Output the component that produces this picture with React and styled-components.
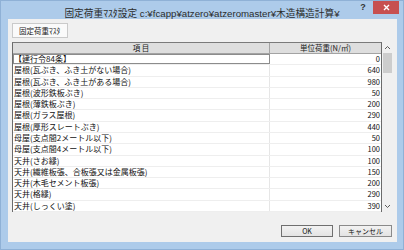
import React from 'react';
import styled, { createGlobalStyle } from 'styled-components';

const GlobalStyle = createGlobalStyle`
  html, body {
    margin: 0;
    padding: 0;
    background: #ffffff;
  }
  body {
    font-family: "Noto Sans CJK JP", "Noto Sans", sans-serif;
  }
  * {
    box-sizing: border-box;
  }
`;

const Window = styled.div`
  width: 404px;
  height: 250px;
  background-color: #adcbea;
  border: 1px solid #8fb1d6;
  display: flex;
  flex-direction: column;
`;

const TitleBar = styled.div`
  height: 18px;
  display: grid;
  grid-template-columns: 1fr auto 1fr;
  align-items: start;
`;

const Title = styled.div`
  grid-column: 2;
  margin-top: 6px;
  font-family: "Liberation Sans", "Noto Sans CJK JP", sans-serif;
  font-size: 9.7px;
  line-height: 13px;
  color: #2b2b2b;
  white-space: nowrap;
`;

const Controls = styled.div`
  grid-column: 3;
  justify-self: end;
  display: flex;
  align-items: flex-start;
  gap: 5px;
  margin-right: 4px;
`;

const HelpButton = styled.div`
  width: 10px;
  margin-top: 1px;
  font-family: "Liberation Sans", sans-serif;
  font-size: 9px;
  font-weight: bold;
  line-height: 10px;
  color: #333333;
  text-align: center;
`;

const CloseButton = styled.div`
  width: 26px;
  height: 13px;
  background-color: #c75050;
  color: #ffffff;
  display: flex;
  align-items: center;
  justify-content: center;
`;

const Body = styled.div`
  flex: 1;
  margin: 0 6px 7px 7px;
  background-color: #f0f0f0;
  padding: 4px 5px 0 4px;
  display: flex;
  flex-direction: column;
`;

const Tab = styled.div`
  width: 56px;
  height: 15px;
  border: 1px solid #cacaca;
  background-color: #fafafa;
  font-size: 7.5px;
  line-height: 13px;
  padding-left: 6px;
  color: #1a1a1a;
  margin-bottom: 4px;
`;

const GridArea = styled.div`
  display: flex;
  height: 170px;
`;

const Grid = styled.div`
  width: 370px;
  background-color: #ffffff;
  border-left: 1px solid #6b6b6b;
  border-right: 1px solid #6b6b6b;
  border-top: 1px solid #7a7a7a;
  display: flex;
  flex-direction: column;
`;

const HeaderRow = styled.div`
  display: grid;
  grid-template-columns: 257px 1fr;
  height: 11px;
  background-color: #dedede;
  border-bottom: 1px solid #a3a3a3;
`;

const HeaderCell = styled.div`
  font-size: 7.5px;
  line-height: 10px;
  text-align: center;
  color: #1a1a1a;
  border-right: ${p => (p.$last ? 'none' : '1px solid #a3a3a3')};
`;

const Row = styled.div`
  display: grid;
  grid-template-columns: 257px 1fr;
  height: 11.3px;
  border-bottom: 1px solid #eeeeee;
`;

const LabelCell = styled.div`
  font-size: 8px;
  line-height: 10px;
  padding-left: 1px;
  color: #111111;
  white-space: nowrap;
  border-right: 1px solid #e6e6e6;
  outline: ${p => (p.$focused ? '1px solid #8c8c8c' : 'none')};
  outline-offset: -1px;
`;

const ValueCell = styled.div`
  font-size: 7.5px;
  line-height: 10px;
  padding-right: 1px;
  text-align: right;
  color: #111111;
`;

const ScrollBar = styled.div`
  width: 10px;
  display: flex;
  flex-direction: column;
`;

const ScrollArrow = styled.div`
  height: 11px;
  display: flex;
  align-items: center;
  justify-content: center;
`;

const ScrollTrack = styled.div`
  flex: 1;
  padding: 0 0 0 1px;
`;

const Thumb = styled.div`
  width: 9px;
  height: 20px;
  background-color: #cdcdcd;
`;

const ButtonRow = styled.div`
  display: flex;
  justify-content: flex-end;
  gap: 6px;
  padding-top: 13px;
`;

const Button = styled.div`
  width: ${p => p.$w}px;
  height: 12px;
  border: 1px solid ${p => (p.$default ? '#6f6f6f' : '#8a8a8a')};
  background: linear-gradient(#f2f2f2, #e3e3e3);
  font-size: 7px;
  line-height: 10px;
  text-align: center;
  color: #111111;
`;

const Chevron = ({ up }) => (
  <svg width="7" height="5" viewBox="0 0 7 5">
    <path
      d={up ? 'M1 4 L3.5 1.5 L6 4' : 'M1 1 L3.5 3.5 L6 1'}
      fill="none"
      stroke="#5a5a5a"
      strokeWidth="1"
    />
  </svg>
);

const rows = [
  ['【建行令84条】', '0'],
  ['屋根(瓦ぶき、ふき土がない場合)', '640'],
  ['屋根(瓦ぶき、ふき土がある場合)', '980'],
  ['屋根(波形鉄板ぶき)', '50'],
  ['屋根(薄鉄板ぶき)', '200'],
  ['屋根(ガラス屋根)', '290'],
  ['屋根(厚形スレートぶき)', '440'],
  ['母屋(支点間2メートル以下)', '50'],
  ['母屋(支点間4メートル以下)', '100'],
  ['天井(さお縁)', '100'],
  ['天井(繊維板張、合板張又は金属板張)', '150'],
  ['天井(木毛セメント板張)', '200'],
  ['天井(格縁)', '290'],
  ['天井(しっくい塗)', '390'],
];

const App = () => (
  <>
    <GlobalStyle />
    <Window>
      <TitleBar>
        <Title>固定荷重ﾏｽﾀ設定 c:¥fcapp¥atzero¥atzeromaster¥木造構造計算¥</Title>
        <Controls>
          <HelpButton>?</HelpButton>
          <CloseButton>
            <svg width="7" height="7" viewBox="0 0 7 7">
              <path d="M1 1 L6 6 M6 1 L1 6" stroke="#ffffff" strokeWidth="1.4" />
            </svg>
          </CloseButton>
        </Controls>
      </TitleBar>
      <Body>
        <Tab>固定荷重ﾏｽﾀ</Tab>
        <GridArea>
          <Grid>
            <HeaderRow>
              <HeaderCell>項 目</HeaderCell>
              <HeaderCell $last>単位荷重(N/㎡)</HeaderCell>
            </HeaderRow>
            {rows.map(([label, value], i) => (
              <Row key={label}>
                <LabelCell $focused={i === 0}>{label}</LabelCell>
                <ValueCell>{value}</ValueCell>
              </Row>
            ))}
          </Grid>
          <ScrollBar>
            <ScrollArrow>
              <Chevron up />
            </ScrollArrow>
            <ScrollTrack>
              <Thumb />
            </ScrollTrack>
            <ScrollArrow>
              <Chevron />
            </ScrollArrow>
          </ScrollBar>
        </GridArea>
        <ButtonRow>
          <Button $w={52} $default>OK</Button>
          <Button $w={53}>キャンセル</Button>
        </ButtonRow>
      </Body>
    </Window>
  </>
);

export default App;
